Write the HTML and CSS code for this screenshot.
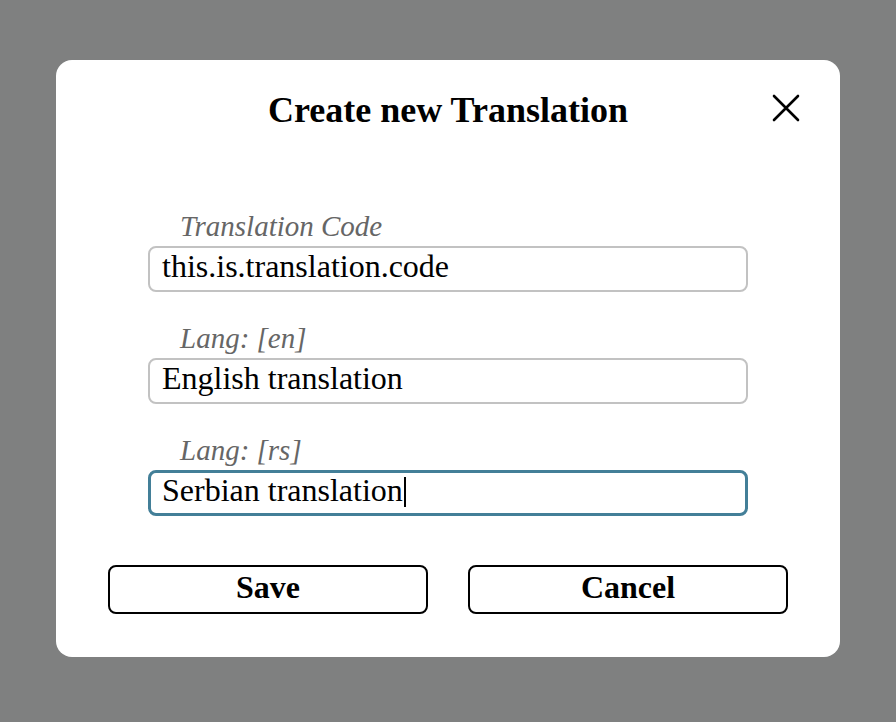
FILE: index.html
```html
<!DOCTYPE html>
<html>
<head>
<meta charset="utf-8">
<link rel="stylesheet" href="styles.css">
</head>
<body>
<div class="overlay">
  <div class="modal">
    <div class="modal-header">
      <h2 class="title">Create new Translation</h2>
      <button class="close" aria-label="Close">
        <svg width="28" height="28" viewBox="0 0 28 28"><path d="M2 2 L26 26 M26 2 L2 26" stroke="#000" stroke-width="2.6" stroke-linecap="round" fill="none"/></svg>
      </button>
    </div>
    <form class="form">
      <div class="field">
        <label class="label">Translation Code</label>
        <div class="input">this.is.translation.code</div>
      </div>
      <div class="field">
        <label class="label">Lang: [en]</label>
        <div class="input">English translation</div>
      </div>
      <div class="field">
        <label class="label">Lang: [rs]</label>
        <div class="input focused">Serbian translation<span class="caret"></span></div>
      </div>
    </form>
    <div class="actions">
      <button class="btn">Save</button>
      <button class="btn">Cancel</button>
    </div>
  </div>
</div>
</body>
</html>
```
FILE: styles.css
```css
html, body {
  margin: 0;
  padding: 0;
  background: #7f8080;
  font-family: "Liberation Serif", "Times New Roman", serif;
}
.overlay {
  width: 896px;
  height: 722px;
  padding-top: 60px;
  box-sizing: border-box;
  display: flex;
  justify-content: center;
}
.modal {
  width: 784px;
  height: 597px;
  background: #fff;
  border-radius: 16px;
  box-sizing: border-box;
  padding-top: 29px;
  position: relative;
}
.modal-header {
  position: relative;
  display: flex;
  justify-content: center;
}
.title {
  margin: 0;
  font-size: 36px;
  line-height: 42px;
  font-weight: bold;
  color: #000;
}
.close {
  position: absolute;
  right: 38px;
  top: 3px;
  width: 32px;
  height: 32px;
  padding: 0;
  border: 0;
  background: none;
  display: flex;
  align-items: center;
  justify-content: center;
}
.form {
  margin-top: 80px;
  padding: 0 92px;
  display: flex;
  flex-direction: column;
  gap: 31px;
}
.field {
  display: flex;
  flex-direction: column;
}
.label {
  font-style: italic;
  font-size: 29px;
  line-height: 30px;
  color: #666;
  margin-left: 32px;
  margin-bottom: 5px;
}
.input {
  height: 46px;
  box-sizing: border-box;
  border: 2px solid #c2c2c2;
  border-radius: 8px;
  padding: 0 12px 6px;
  font-size: 32px;
  line-height: 36px;
  color: #000;
  display: flex;
  align-items: center;
}
.input.focused {
  border: 3px solid #437f98;
  padding: 0 11px 6px;
}
.caret {
  display: inline-block;
  width: 2px;
  height: 30px;
  background: #000;
  margin-left: 1px;
  margin-top: 4px;
}
.actions {
  margin-top: 49px;
  padding: 0 52px;
  display: flex;
  gap: 40px;
}
.btn {
  flex: 1;
  height: 49px;
  box-sizing: border-box;
  border: 2px solid #000;
  border-radius: 8px;
  background: #fff;
  font-family: "Liberation Serif", "Times New Roman", serif;
  font-weight: bold;
  font-size: 32px;
  line-height: 38px;
  color: #000;
  padding: 0 0 6px;
}
```
